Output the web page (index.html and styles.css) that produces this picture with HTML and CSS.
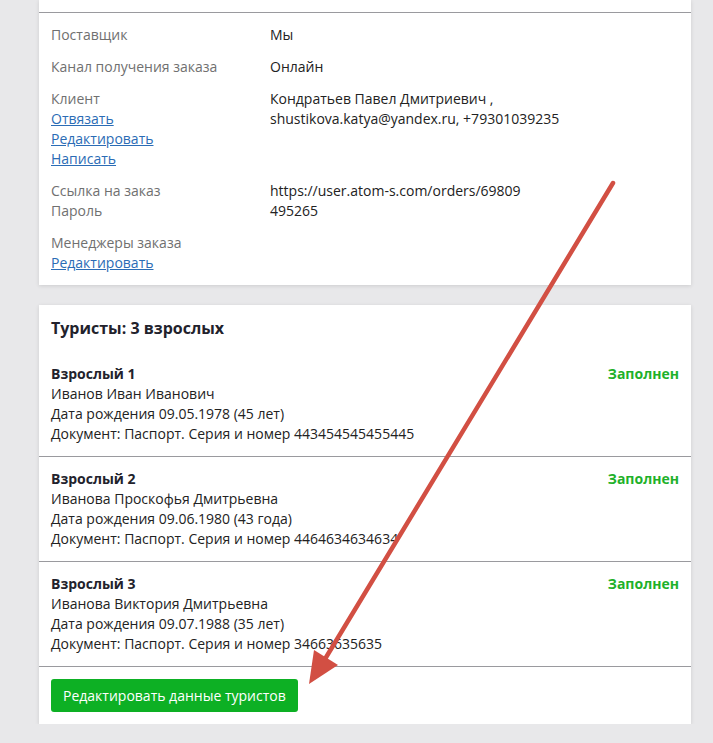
FILE: index.html
```html
<!DOCTYPE html>
<html lang="ru">
<head>
    <meta charset="UTF-8">
    <meta name="viewport" content="width=device-width, initial-scale=1.0">
    <title>Заказ</title>
    <link rel="stylesheet" href="styles.css">
</head>
<body>
    <div class="page">
        <div class="card">
            <div class="card-top"></div>
            <div class="details">
                <div class="group">
                    <div class="label">Поставщик</div>
                    <div class="value">Мы</div>
                </div>
                <div class="group">
                    <div class="label">Канал получения заказа</div>
                    <div class="value">Онлайн</div>
                </div>
                <div class="group">
                    <div class="label">
                        Клиент<br>
                        <a href="#">Отвязать</a><br>
                        <a href="#">Редактировать</a><br>
                        <a href="#">Написать</a>
                    </div>
                    <div class="value">Кондратьев Павел Дмитриевич ,<br>shustikova.katya@yandex.ru, +79301039235</div>
                </div>
                <div class="group">
                    <div class="label">Ссылка на заказ<br>Пароль</div>
                    <div class="value">https://user.atom-s.com/orders/69809<br>495265</div>
                </div>
                <div class="group">
                    <div class="label">
                        Менеджеры заказа<br>
                        <a href="#">Редактировать</a>
                    </div>
                    <div class="value"></div>
                </div>
            </div>
        </div>

        <div class="card tourists">
            <h2 class="tourists-title">Туристы: 3 взрослых</h2>

            <div class="tourist">
                <div class="tourist-info">
                    <b>Взрослый 1</b><br>
                    Иванов Иван Иванович<br>
                    Дата рождения 09.05.1978 (45 лет)<br>
                    Документ: Паспорт. Серия и номер 443454545455445
                </div>
                <div class="status">Заполнен</div>
            </div>

            <div class="tourist">
                <div class="tourist-info">
                    <b>Взрослый 2</b><br>
                    Иванова Проскофья Дмитрьевна<br>
                    Дата рождения 09.06.1980 (43 года)<br>
                    Документ: Паспорт. Серия и номер 4464634634634
                </div>
                <div class="status">Заполнен</div>
            </div>

            <div class="tourist">
                <div class="tourist-info">
                    <b>Взрослый 3</b><br>
                    Иванова Виктория Дмитрьевна<br>
                    Дата рождения 09.07.1988 (35 лет)<br>
                    Документ: Паспорт. Серия и номер 34663635635
                </div>
                <div class="status">Заполнен</div>
            </div>

            <div class="actions">
                <button class="btn-green">Редактировать данные туристов</button>
            </div>
        </div>
    </div>

    <!-- annotation arrow -->
    <svg class="arrow" width="713" height="743" viewBox="0 0 713 743">
        <line x1="613" y1="183" x2="322" y2="664" stroke="#d24f43" stroke-width="4.5" stroke-linecap="round"/>
        <polygon points="309,684 314,650 338,665" fill="#d24f43"/>
    </svg>
</body>
</html>
```

FILE: styles.css
```css
body {
    margin: 0;
    background-color: #e8e8ea;
    font-family: "Open Sans", Arial, sans-serif;
    font-size: 14px;
    line-height: 20px;
    color: #222;
}

.page {
    width: 652px;
    margin-left: 39px;
    display: flex;
    flex-direction: column;
    gap: 20px;
}

.card {
    background-color: #fff;
    box-shadow: 0 1px 4px rgba(0, 0, 0, 0.12);
}

.card-top {
    height: 12px;
    border-bottom: 1px solid #9a9a9e;
}

.details {
    padding: 12px 12px 12px;
    display: flex;
    flex-direction: column;
    gap: 12px;
}

.group {
    display: flex;
}

.label {
    width: 219px;
    color: #707070;
}

.label a {
    color: #2b6cb5;
}

.value {
    color: #222;
}

.tourists-title {
    margin: 0;
    padding: 12px 12px 13px;
    font-size: 16px;
    line-height: 22px;
    font-weight: 700;
    color: #22222c;
}

.tourist {
    display: flex;
    justify-content: space-between;
    padding: 12px;
    border-bottom: 1px solid #9a9a9e;
}

.tourist-info b {
    color: #22222c;
}

.status {
    color: #1eb12a;
    font-weight: 700;
}

.actions {
    padding: 12px;
}

.btn-green {
    background-color: #0db024;
    color: #fff;
    border: none;
    border-radius: 3px;
    height: 33px;
    padding: 0 12px;
    font-family: "Open Sans", Arial, sans-serif;
    font-size: 14px;
    cursor: pointer;
}

.arrow {
    position: absolute;
    left: 0;
    top: 0;
    pointer-events: none;
}
```
